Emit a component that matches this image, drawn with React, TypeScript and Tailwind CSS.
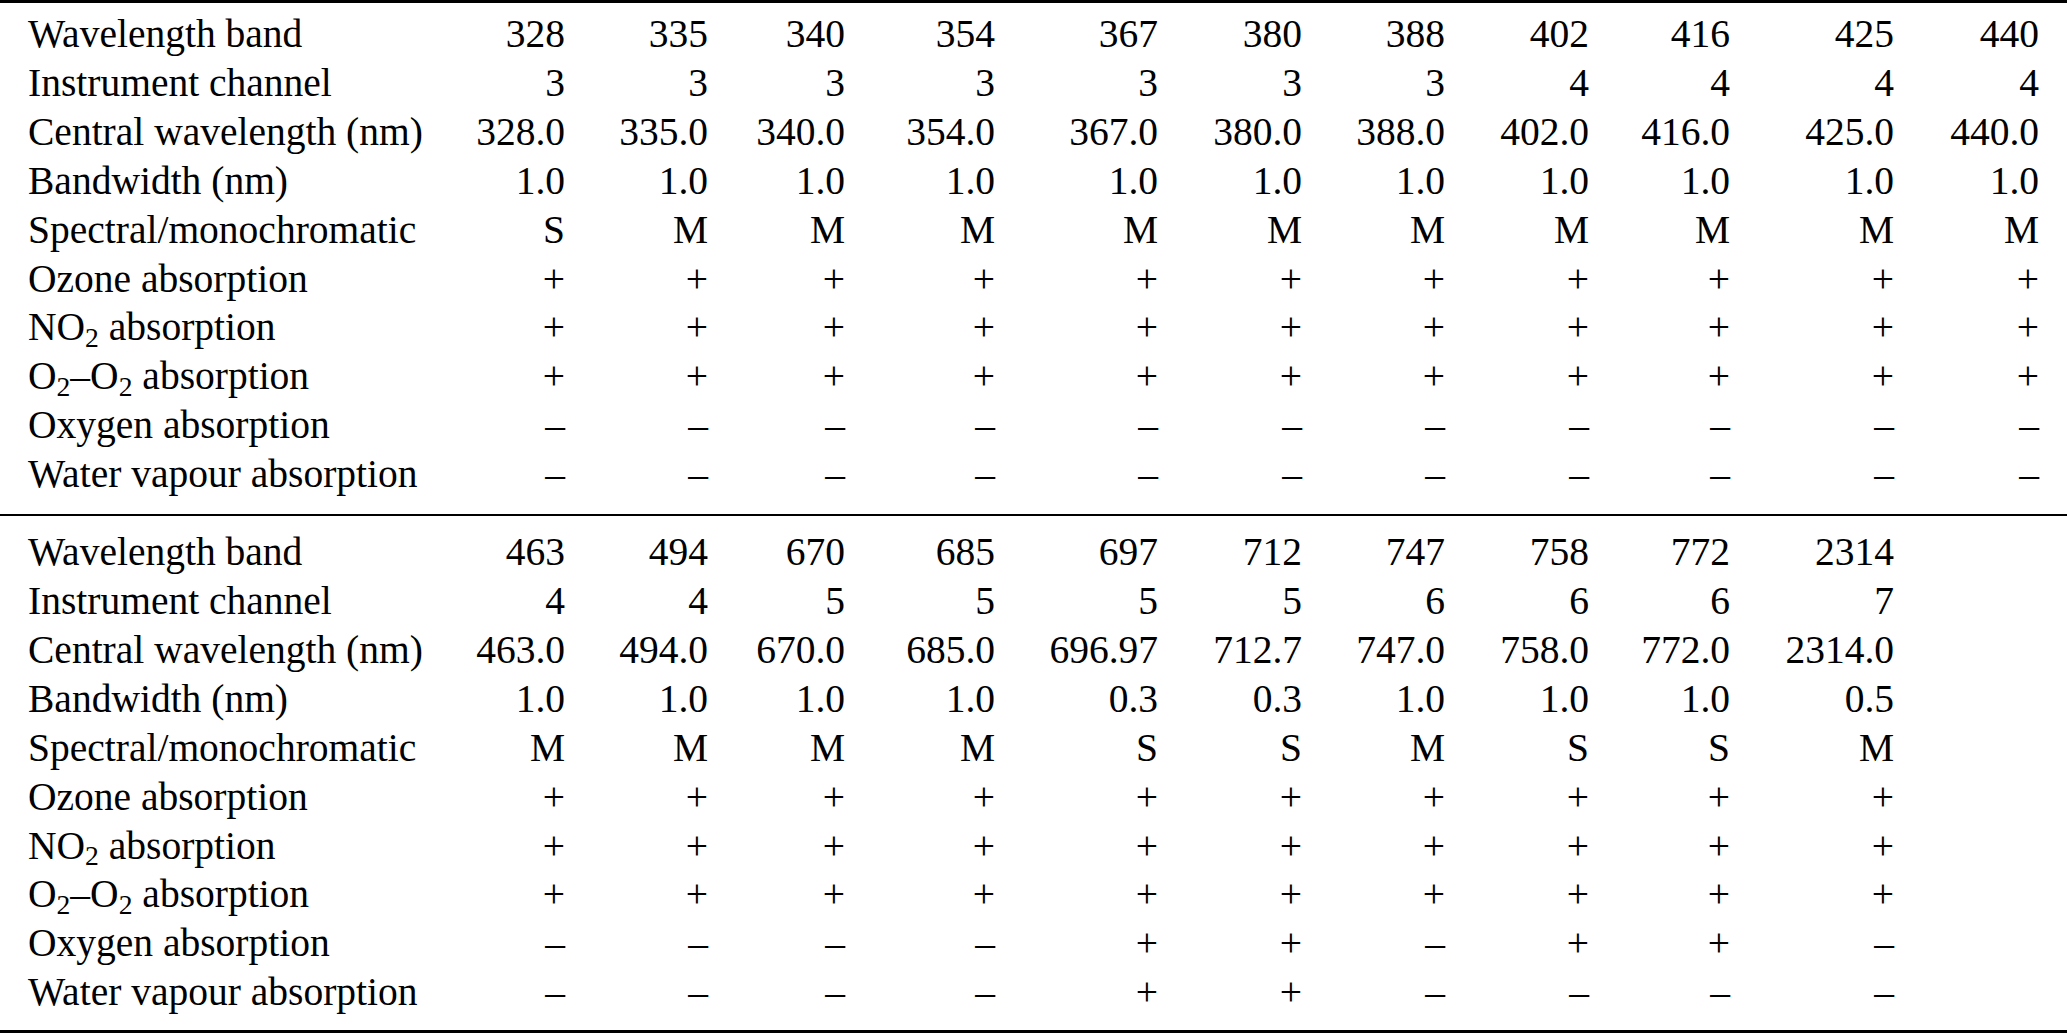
import React from 'react';

type Row = { label: React.ReactNode; values: string[] };

const NO2 = (
  <>
    NO<sub className="text-[0.7em]">2</sub> absorption
  </>
);

const O2O2 = (
  <>
    O<sub className="text-[0.7em]">2</sub>–O<sub className="text-[0.7em]">2</sub> absorption
  </>
);

const plus = (n: number) => Array(n).fill('+');
const dash = (n: number) => Array(n).fill('–');

const upper: Row[] = [
  { label: 'Wavelength band', values: ['328', '335', '340', '354', '367', '380', '388', '402', '416', '425', '440'] },
  { label: 'Instrument channel', values: ['3', '3', '3', '3', '3', '3', '3', '4', '4', '4', '4'] },
  {
    label: 'Central wavelength (nm)',
    values: ['328.0', '335.0', '340.0', '354.0', '367.0', '380.0', '388.0', '402.0', '416.0', '425.0', '440.0'],
  },
  { label: 'Bandwidth (nm)', values: Array(11).fill('1.0') },
  { label: 'Spectral/monochromatic', values: ['S', 'M', 'M', 'M', 'M', 'M', 'M', 'M', 'M', 'M', 'M'] },
  { label: 'Ozone absorption', values: plus(11) },
  { label: NO2, values: plus(11) },
  { label: O2O2, values: plus(11) },
  { label: 'Oxygen absorption', values: dash(11) },
  { label: 'Water vapour absorption', values: dash(11) },
];

const lower: Row[] = [
  { label: 'Wavelength band', values: ['463', '494', '670', '685', '697', '712', '747', '758', '772', '2314', ''] },
  { label: 'Instrument channel', values: ['4', '4', '5', '5', '5', '5', '6', '6', '6', '7', ''] },
  {
    label: 'Central wavelength (nm)',
    values: ['463.0', '494.0', '670.0', '685.0', '696.97', '712.7', '747.0', '758.0', '772.0', '2314.0', ''],
  },
  { label: 'Bandwidth (nm)', values: ['1.0', '1.0', '1.0', '1.0', '0.3', '0.3', '1.0', '1.0', '1.0', '0.5', ''] },
  { label: 'Spectral/monochromatic', values: ['M', 'M', 'M', 'M', 'S', 'S', 'M', 'S', 'S', 'M', ''] },
  { label: 'Ozone absorption', values: [...plus(10), ''] },
  { label: NO2, values: [...plus(10), ''] },
  { label: O2O2, values: [...plus(10), ''] },
  { label: 'Oxygen absorption', values: ['–', '–', '–', '–', '+', '+', '–', '+', '+', '–', ''] },
  { label: 'Water vapour absorption', values: ['–', '–', '–', '–', '+', '+', '–', '–', '–', '–', ''] },
];

function Block({ rows }: { rows: Row[] }) {
  return (
    <div className="grid grid-cols-[422px_143px_143px_137px_150px_163px_144px_143px_144px_141px_164px_145px] pr-[28px]">
      {rows.map((row, i) => (
        <React.Fragment key={i}>
          <div className="pl-[28px] whitespace-nowrap">{row.label}</div>
          {row.values.map((v, j) => (
            <div key={j} className="text-right whitespace-nowrap">
              {v}
            </div>
          ))}
        </React.Fragment>
      ))}
    </div>
  );
}

export default function App() {
  return (
    <div className="w-[2067px] h-[1033px] bg-white text-black font-['Liberation_Serif',serif] text-[39.5px] leading-[48.9px] overflow-hidden">
      <div className="border-t-[3px] border-black pt-[7px] pb-[15px]">
        <Block rows={upper} />
      </div>
      <div className="border-t-2 border-b-[3px] border-black pt-[12px] pb-[13px]">
        <Block rows={lower} />
      </div>
    </div>
  );
}
